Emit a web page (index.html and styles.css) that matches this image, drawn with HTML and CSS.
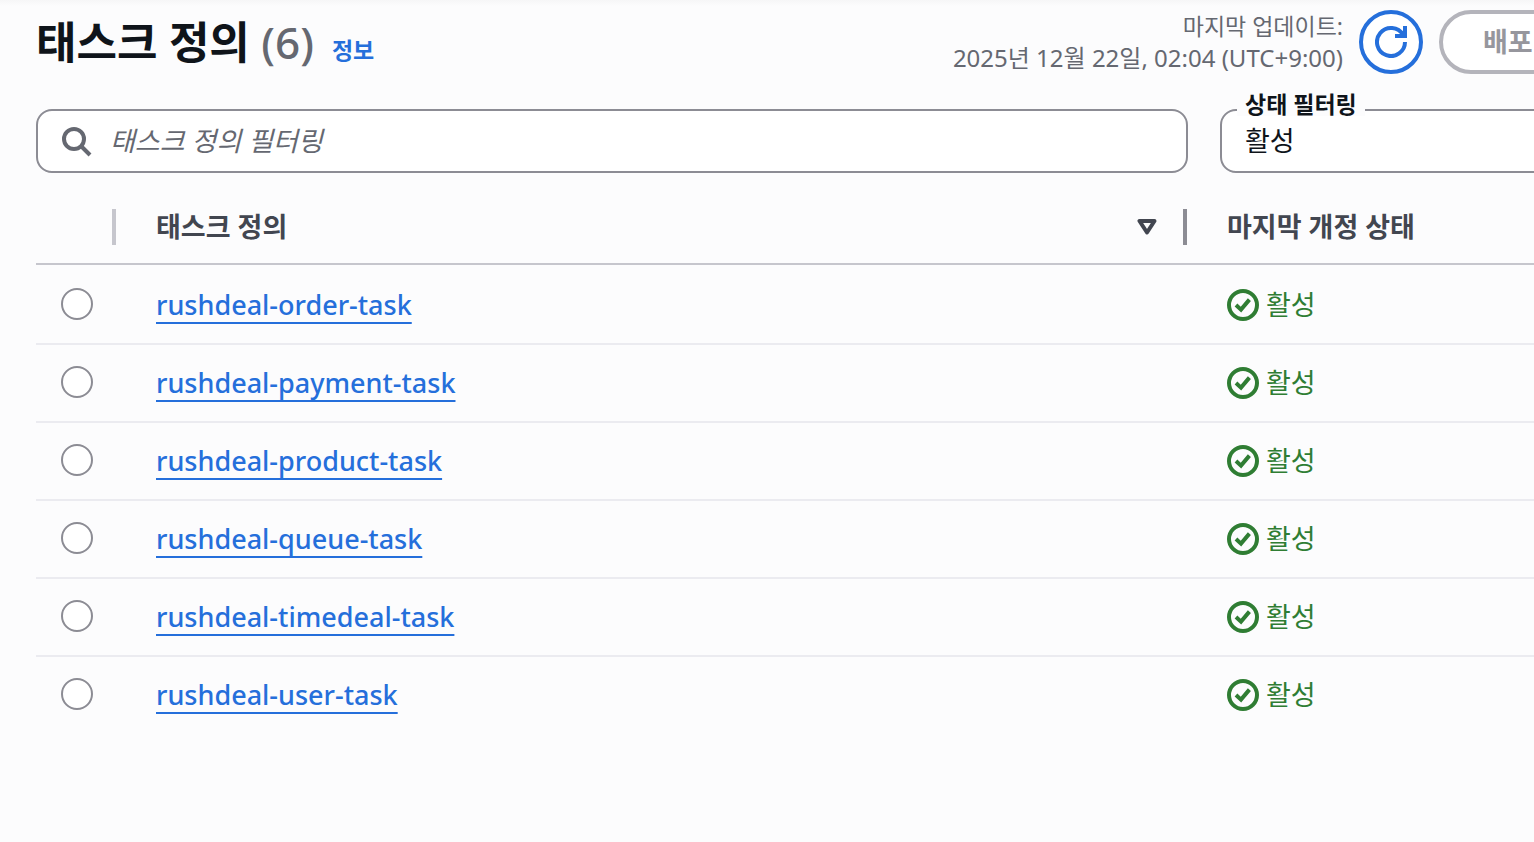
FILE: index.html
```html
<!DOCTYPE html>
<html lang="ko">

<head>
    <meta charset="UTF-8">
    <meta name="viewport" content="width=device-width, initial-scale=1.0">
    <title>태스크 정의</title>
    <link rel="stylesheet" href="styles.css">
</head>

<body>

    <svg class="sprite" aria-hidden="true">
        <symbol id="check" viewBox="0 0 16 16">
            <circle cx="8" cy="8" r="7" />
            <path d="M4.5 8 7 10.300 11.200 5.300" />
        </symbol>
    </svg>

    <main class="panel">
        <header class="panelhead">
            <div class="title">
                <h1>태스크 정의 <span class="count">(6)</span></h1>
                <a href="#" class="info">정보</a>
            </div>
            <div class="actions">
                <div class="updated">
                    <p>마지막 업데이트:</p>
                    <p class="date">2025년 12월 22일, 02:04 (UTC+9:00)</p>
                </div>
                <button type="button" class="btn refresh" aria-label="새로 고침">
                    <svg viewBox="0 0 32 32" class="icon">
                        <path d="M30 16A14 14 0 1 1 28.100 9" />
                        <path d="M30 0V10H20" />
                    </svg>
                </button>
                <button type="button" class="btn deploy" disabled>배포</button>
            </div>
        </header>

        <div class="filters">
            <div class="search">
                <svg viewBox="0 0 32 32" class="icon">
                    <circle cx="13" cy="14" r="10" />
                    <path d="M20 21 29 30" />
                </svg>
                <input type="search" placeholder="태스크 정의 필터링" aria-label="태스크 정의 필터링">
            </div>
            <div class="status">
                <label for="status">상태 필터링</label>
                <select id="status">
                    <option>활성</option>
                </select>
            </div>
        </div>

        <table class="tasks">
            <thead>
                <tr>
                    <th class="colpick"><div class="cell"></div></th>
                    <th><div class="cell sorted">태스크 정의
                        <svg viewBox="0 0 20 16" class="sort">
                            <path d="M2.500 2H17.500L10 13.500Z" />
                        </svg>
                    </div></th>
                    <th class="colstate"><div class="cell last">마지막 개정 상태</div></th>
                </tr>
            </thead>
            <tbody>
                <tr>
                    <td><input type="radio" name="task" aria-label="rushdeal-order-task"></td>
                    <td><a href="#">rushdeal-order-task</a></td>
                    <td><span class="active"><svg><use href="#check" /></svg>활성</span></td>
                </tr>
                <tr>
                    <td><input type="radio" name="task" aria-label="rushdeal-payment-task"></td>
                    <td><a href="#">rushdeal-payment-task</a></td>
                    <td><span class="active"><svg><use href="#check" /></svg>활성</span></td>
                </tr>
                <tr>
                    <td><input type="radio" name="task" aria-label="rushdeal-product-task"></td>
                    <td><a href="#">rushdeal-product-task</a></td>
                    <td><span class="active"><svg><use href="#check" /></svg>활성</span></td>
                </tr>
                <tr>
                    <td><input type="radio" name="task" aria-label="rushdeal-queue-task"></td>
                    <td><a href="#">rushdeal-queue-task</a></td>
                    <td><span class="active"><svg><use href="#check" /></svg>활성</span></td>
                </tr>
                <tr>
                    <td><input type="radio" name="task" aria-label="rushdeal-timedeal-task"></td>
                    <td><a href="#">rushdeal-timedeal-task</a></td>
                    <td><span class="active"><svg><use href="#check" /></svg>활성</span></td>
                </tr>
                <tr>
                    <td><input type="radio" name="task" aria-label="rushdeal-user-task"></td>
                    <td><a href="#">rushdeal-user-task</a></td>
                    <td><span class="active"><svg><use href="#check" /></svg>활성</span></td>
                </tr>
            </tbody>
        </table>
    </main>

</body>

</html>
```
FILE: styles.css
```css
* {
    margin: 0;
    padding: 0;
    box-sizing: border-box;
}

body {
    font-family: "Noto Sans", "Noto Sans CJK KR", sans-serif;
    font-size: 27px;
    line-height: 40px;
    color: #0f141a;
    background: linear-gradient(#f6f6f7, #fcfcfd 6px) no-repeat #fcfcfd;
    overflow-x: hidden;
}

svg {
    fill: none;
    stroke: currentColor;
}

.sprite {
    display: none;
}

/* the panel runs past the right edge of the window */
.panel {
    margin: 10px -86px 0 36px;
}

.panelhead {
    display: flex;
    justify-content: space-between;
    height: 64px;
}

.title {
    display: flex;
    align-items: baseline;
    gap: 18px;
}

h1 {
    font-size: 44px;
    line-height: 64px;
    font-weight: 700;
}

.count {
    font-weight: 500;
    color: #656871;
}

.info {
    font-size: 23px;
    font-weight: 700;
    color: #256fdb;
    text-decoration: none;
}

.actions {
    display: flex;
    gap: 16px;
}

.updated {
    font-size: 23px;
    line-height: 32px;
    color: #656871;
    text-align: right;
}

.date {
    font-size: 24px;
}

.btn {
    height: 64px;
    border: 4px solid;
    border-radius: 32px;
    background-color: #fff;
    font: inherit;
    font-weight: 700;
}

.refresh {
    display: flex;
    justify-content: center;
    align-items: center;
    width: 64px;
    color: #256fdb;
}

.icon {
    width: 32px;
    height: 32px;
    stroke-width: 4;
}

.deploy {
    width: 181px;
    padding-left: 40px;
    text-align: left;
    color: #96969d;
    border-color: #b4b4bb;
}

.filters {
    display: flex;
    gap: 32px;
    margin-top: 35px;
}

.search,
select {
    height: 64px;
    border: 2px solid #8c8c94;
    border-radius: 16px;
    background-color: #fff;
}

.search {
    flex: 1;
    display: flex;
    align-items: center;
    gap: 17px;
    padding: 0 23px;
    color: #656871;
}

.search input {
    flex: 1;
    border: 0;
    outline: 0;
    background: none;
    font: inherit;
}

.search input::placeholder {
    color: #656871;
    font-style: italic;
}

.status {
    position: relative;
    width: 400px;
}

.status label {
    position: absolute;
    top: -17px;
    left: 17px;
    padding: 0 8px;
    font-size: 23px;
    line-height: 24px;
    font-weight: 700;
    background-color: #fcfcfd;
}

select {
    width: 100%;
    padding: 0 23px;
    appearance: none;
    font: inherit;
    color: inherit;
}

.tasks {
    width: 100%;
    margin-top: 18px;
    border-collapse: separate;
    border-spacing: 0;
    table-layout: fixed;
}

.colpick {
    width: 80px;
}

.colstate {
    width: 433px;
}

th {
    padding: 18px 0;
    border-bottom: 2px solid #c6c6cd;
    text-align: left;
    color: #424650;
}

.cell {
    height: 36px;
    line-height: 36px;
    border-right: 4px solid #c6c6cd;
}

.sorted {
    display: flex;
    justify-content: space-between;
    align-items: center;
    padding: 0 26px 0 40px;
    border-color: #8c8c94;
}

.sort {
    width: 20px;
    height: 16px;
    stroke-width: 4;
    stroke-linejoin: round;
}

.last {
    padding-left: 40px;
    border: 0;
}

td {
    height: 78px;
    padding-left: 40px;
    border-bottom: 2px solid #ebebf0;
    vertical-align: middle;
}

td:first-child {
    padding-left: 25px;
    padding-bottom: 2px;
}

tr:first-child td {
    height: 80px;
    padding-top: 2px;
}

tr:last-child td {
    height: 76px;
    border-bottom: 0;
}

td input {
    display: block;
    width: 32px;
    height: 32px;
    appearance: none;
    border: 2px solid #8c8c94;
    border-radius: 50%;
    background-color: #fff;
}

td a {
    font-weight: 500;
    color: #256fdb;
    text-decoration: underline;
    text-decoration-thickness: 2px;
    text-decoration-skip-ink: none;
    text-underline-offset: 7px;
}

.active {
    display: flex;
    align-items: center;
    gap: 7px;
    color: #2f7d33;
}

.active svg {
    width: 32px;
    height: 32px;
    stroke-width: 2;
}
```
